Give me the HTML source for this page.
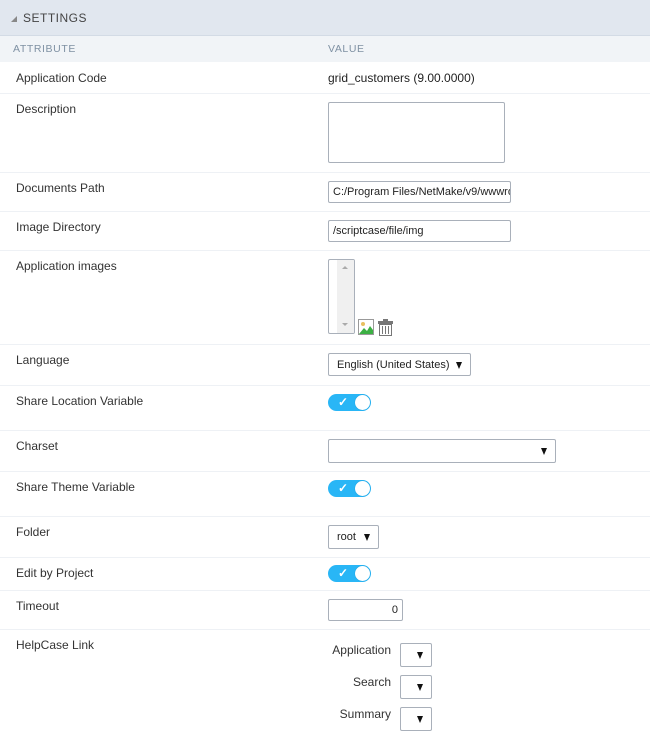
<!DOCTYPE html><html><head><style>
body{margin:0;width:650px;height:744px;background:#fff;font-family:"Liberation Sans",sans-serif;font-size:12px;color:#333;position:relative;overflow:hidden}
.a{position:absolute}
.l{position:absolute;left:16px;line-height:14px}
.ln{position:absolute;left:0;width:650px;height:1px;background:#eef1f5}
.in{position:absolute;border:1px solid #a9b0ba;border-radius:2px;background:#fff;box-sizing:border-box;font-size:11px;color:#222;padding-left:4px;white-space:nowrap;overflow:hidden}
.ar{position:absolute;right:8px;top:50%;margin-top:-3px;width:0;height:0;border-left:3px solid transparent;border-right:3px solid transparent;border-top:7px solid #111}
.tg{position:absolute;left:328px;width:43px;height:17px;border-radius:9px;background:#29b6f6}
.tg i{position:absolute;right:1px;top:1px;width:15px;height:15px;border-radius:50%;background:#fff;box-shadow:0 0 1px #0a8cc8}
.tg b{position:absolute;left:10px;top:0;color:#fff;font-size:12px;line-height:17px}
.hl{position:absolute;width:80px;text-align:right;left:311px}
</style></head><body>
<div class="a" style="left:0;top:0;width:650px;height:35px;background:#e1e7ef;border-bottom:1px solid #d3dbe5"></div>
<div class="a" style="left:11px;top:16px;width:0;height:0;border-left:6px solid transparent;border-bottom:6px solid #888"></div>
<div class="a" style="left:23px;top:11px;font-size:12px;letter-spacing:0.5px;color:#444">SETTINGS</div>
<div class="a" style="left:0;top:36px;width:650px;height:26px;background:#f1f4f7"></div>
<div class="a" style="left:13px;top:43px;font-size:10.5px;letter-spacing:0.6px;color:#7f91a3">ATTRIBUTE</div>
<div class="a" style="left:328px;top:43px;font-size:10.5px;letter-spacing:0.6px;color:#7f91a3">VALUE</div>

<div class="l" style="top:71px">Application Code</div>
<div class="a" style="left:328px;top:71px;color:#222">grid_customers (9.00.0000)</div>
<div class="ln" style="top:93px"></div>
<div class="l" style="top:102px">Description</div>
<div class="in" style="left:328px;top:102px;width:177px;height:61px"></div>
<div class="ln" style="top:172px"></div>
<div class="l" style="top:181px">Documents Path</div>
<div class="in" style="left:328px;top:181px;width:183px;height:22px;line-height:20px">C:/Program Files/NetMake/v9/wwwroot</div>
<div class="ln" style="top:211px"></div>
<div class="l" style="top:220px">Image Directory</div>
<div class="in" style="left:328px;top:220px;width:183px;height:22px;line-height:20px">/scriptcase/file/img</div>
<div class="ln" style="top:250px"></div>
<div class="l" style="top:259px">Application images</div>
<div class="in" style="left:328px;top:259px;width:27px;height:75px;padding:0"><div class="a" style="right:0;top:0;width:17px;height:73px;background:#f0f0f0"></div>
<div class="a" style="left:13px;top:6px;border-left:3px solid transparent;border-right:3px solid transparent;border-bottom:3px solid #aaa"></div>
<div class="a" style="left:13px;top:63px;border-left:3px solid transparent;border-right:3px solid transparent;border-top:3px solid #aaa"></div></div>
<svg class="a" style="left:358px;top:319px" width="16" height="16"><rect x="0.5" y="0.5" width="15" height="15" fill="#fff" stroke="#999"/><circle cx="5" cy="5" r="2" fill="#e8c060"/><path d="M1 15 L6 9 L9 12 L12 7 L15 11 L15 15Z" fill="#3cb043"/></svg>
<svg class="a" style="left:377px;top:319px" width="17" height="17"><rect x="1" y="2" width="15" height="3" fill="#777"/><rect x="6" y="0" width="5" height="2" fill="#777"/><rect x="2.5" y="5.5" width="12" height="11" fill="#fff" stroke="#777"/><path d="M5.5 7v8M8.5 7v8M11.5 7v8" stroke="#777"/></svg>
<div class="ln" style="top:344px"></div>
<div class="l" style="top:353px">Language</div>
<div class="in" style="left:328px;top:353px;width:143px;height:23px;line-height:22px;padding-left:8px">English (United States)<span class="ar"></span></div>
<div class="ln" style="top:385px"></div>
<div class="l" style="top:394px">Share Location Variable</div>
<div class="tg" style="top:394px"><b>✓</b><i></i></div>
<div class="ln" style="top:430px"></div>
<div class="l" style="top:439px">Charset</div>
<div class="in" style="left:328px;top:439px;width:228px;height:24px"><span class="ar"></span></div>
<div class="ln" style="top:471px"></div>
<div class="l" style="top:480px">Share Theme Variable</div>
<div class="tg" style="top:480px"><b>✓</b><i></i></div>
<div class="ln" style="top:516px"></div>
<div class="l" style="top:525px">Folder</div>
<div class="in" style="left:328px;top:525px;width:51px;height:24px;line-height:23px;padding-left:8px">root<span class="ar"></span></div>
<div class="ln" style="top:557px"></div>
<div class="l" style="top:566px">Edit by Project</div>
<div class="tg" style="top:565px"><b>✓</b><i></i></div>
<div class="ln" style="top:590px"></div>
<div class="l" style="top:599px">Timeout</div>
<div class="in" style="left:328px;top:599px;width:75px;height:22px;line-height:20px;text-align:right;padding-right:4px">0</div>
<div class="ln" style="top:629px"></div>
<div class="l" style="top:638px">HelpCase Link</div>
<div class="hl" style="top:643px">Application</div>
<div class="in" style="left:400px;top:643px;width:32px;height:24px"><span class="ar"></span></div>
<div class="hl" style="top:675px">Search</div>
<div class="in" style="left:400px;top:675px;width:32px;height:24px"><span class="ar"></span></div>
<div class="hl" style="top:707px">Summary</div>
<div class="in" style="left:400px;top:707px;width:32px;height:24px"><span class="ar"></span></div>
</body></html>
